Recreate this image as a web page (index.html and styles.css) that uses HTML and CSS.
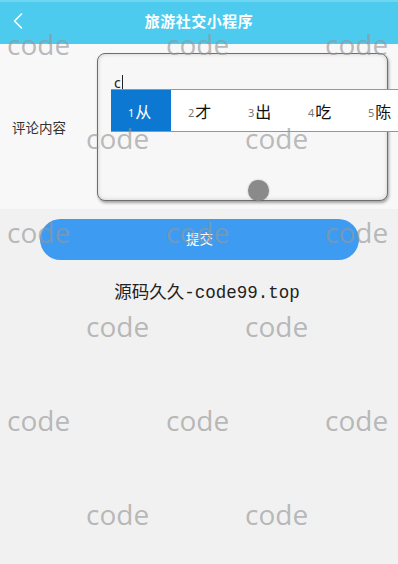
FILE: index.html
```html
<!DOCTYPE html>
<html lang="zh">
<head>
<meta charset="utf-8">
<title>旅游社交小程序</title>
<link rel="stylesheet" href="styles.css">
</head>
<body>
<div class="page">
  <header class="nav">
    <svg class="back" width="12" height="18" viewBox="0 0 12 18"><path d="M9.5 2 L2.5 9 L9.5 16" fill="none" stroke="#fff" stroke-width="1.6" stroke-linecap="round" stroke-linejoin="round"/></svg>
    <h1 class="title">旅游社交小程序</h1>
  </header>

  <section class="form">
    <label class="label">评论内容</label>
    <div class="box">
      <span class="typed">c</span>
      <span class="knob"></span>
    </div>
    <div class="ime">
      <div class="cand active"><span class="num">1</span>从</div>
      <div class="cand"><span class="num">2</span>才</div>
      <div class="cand"><span class="num">3</span>出</div>
      <div class="cand"><span class="num">4</span>吃</div>
      <div class="cand"><span class="num">5</span>陈</div>
    </div>
  </section>

  <div class="actions">
    <button class="submit">提交</button>
  </div>

  <p class="credit">源码久久-code99.top</p>

  <div class="watermarks">
    <div class="wrow odd"><span>code</span><span>code</span><span>code</span></div>
    <div class="wrow even"><span>code</span><span>code</span></div>
    <div class="wrow odd"><span>code</span><span>code</span><span>code</span></div>
    <div class="wrow even"><span>code</span><span>code</span></div>
    <div class="wrow odd"><span>code</span><span>code</span><span>code</span></div>
    <div class="wrow even"><span>code</span><span>code</span></div>
  </div>
</div>
</body>
</html>
```

FILE: styles.css
```css
* { box-sizing: border-box; }
html, body { margin: 0; padding: 0; }
body {
  background: #f1f1f1;
  font-family: "Noto Sans CJK SC", "Noto Sans", sans-serif;
  width: 398px;
  height: 564px;
  overflow: hidden;
}
.page { position: relative; width: 398px; height: 564px; }

.nav {
  height: 44px;
  background: #4ccbee;
  border-top: 2px solid #6fd6f2;
  display: flex;
  align-items: center;
  justify-content: center;
  position: relative;
}
.back { position: absolute; left: 12px; top: 10px; }
.title {
  margin: 0;
  color: #fff;
  font-size: 15px;
  font-weight: 700;
  letter-spacing: 0.5px;
  line-height: 20px;
  margin-top: -4px;
}

.form {
  background: #f8f8f8;
  height: 165px;
  padding: 9px 10px 0 12px;
  display: flex;
  align-items: flex-start;
  position: relative;
}
.label {
  width: 85px;
  font-size: 13.5px;
  color: #333;
  line-height: 20px;
  margin-top: 64px;
}
.box {
  position: relative;
  width: 291px;
  height: 148px;
  border: 1.5px solid #6e6e6e;
  border-radius: 8px;
  background: #f7f7f7;
  box-shadow: 1px 2px 3px rgba(0,0,0,0.35), inset 0 0 4px rgba(0,0,0,0.18);
  padding: 15px 0 0 16px;
}
.typed {
  display: inline-block;
  font-family: "Noto Sans", sans-serif;
  font-size: 14px;
  line-height: 16px;
  color: #222;
  border-bottom: 1px dotted #444;
  border-right: 1px solid #222;
  padding-right: 1px;
}
.knob {
  position: absolute;
  left: 150px;
  bottom: -1px;
  width: 21px;
  height: 21px;
  border-radius: 50%;
  background: #8a8a8a;
  box-shadow: 0 0 2px rgba(0,0,0,0.3);
}

.ime {
  position: absolute;
  left: 111px;
  top: 45px;
  width: 300px;
  height: 43px;
  background: #fff;
  border-top: 1px solid #6ba7b6;
  border-bottom: 1px solid #6ba7b6;
  display: flex;
}
.cand {
  width: 60px;
  flex: none;
  display: flex;
  align-items: center;
  padding-left: 17px;
  font-size: 16px;
  color: #111;
}
.cand.active { background: #0c78d2; color: #fff; }
.num {
  font-family: "Noto Sans", sans-serif;
  font-size: 11px;
  color: #777;
  margin-right: 1px;
  margin-top: 3px;
}
.cand.active .num { color: #fff; }

.actions {
  padding: 10px 39px 0 40px;
}
.submit {
  display: block;
  width: 319px;
  height: 41px;
  border: none;
  border-radius: 21px;
  background: #3d9cf2;
  color: #fff;
  font-family: "Noto Sans CJK SC", sans-serif;
  font-size: 13.5px;
  line-height: 18px;
  padding: 0 0 4px 0;
  margin: 0;
}

.credit {
  margin: 20px 0 0 0;
  padding-left: 16px;
  text-align: center;
  font-family: "Liberation Mono", "Noto Sans CJK SC", monospace;
  font-size: 17.5px;
  line-height: 26px;
  color: #222;
}

.watermarks {
  position: absolute;
  left: 0;
  top: 25px;
  width: 398px;
  display: flex;
  flex-direction: column;
  gap: 56px;
  pointer-events: none;
}
.wrow {
  display: flex;
  gap: 93px;
  height: 38px;
  font-family: "Open Sans", sans-serif;
  font-size: 28px;
  line-height: 38px;
  color: rgba(150,150,150,0.65);
}
.wrow span { width: 66px; }
.wrow.odd { padding-left: 7px; }
.wrow.even { padding-left: 86px; }
```
